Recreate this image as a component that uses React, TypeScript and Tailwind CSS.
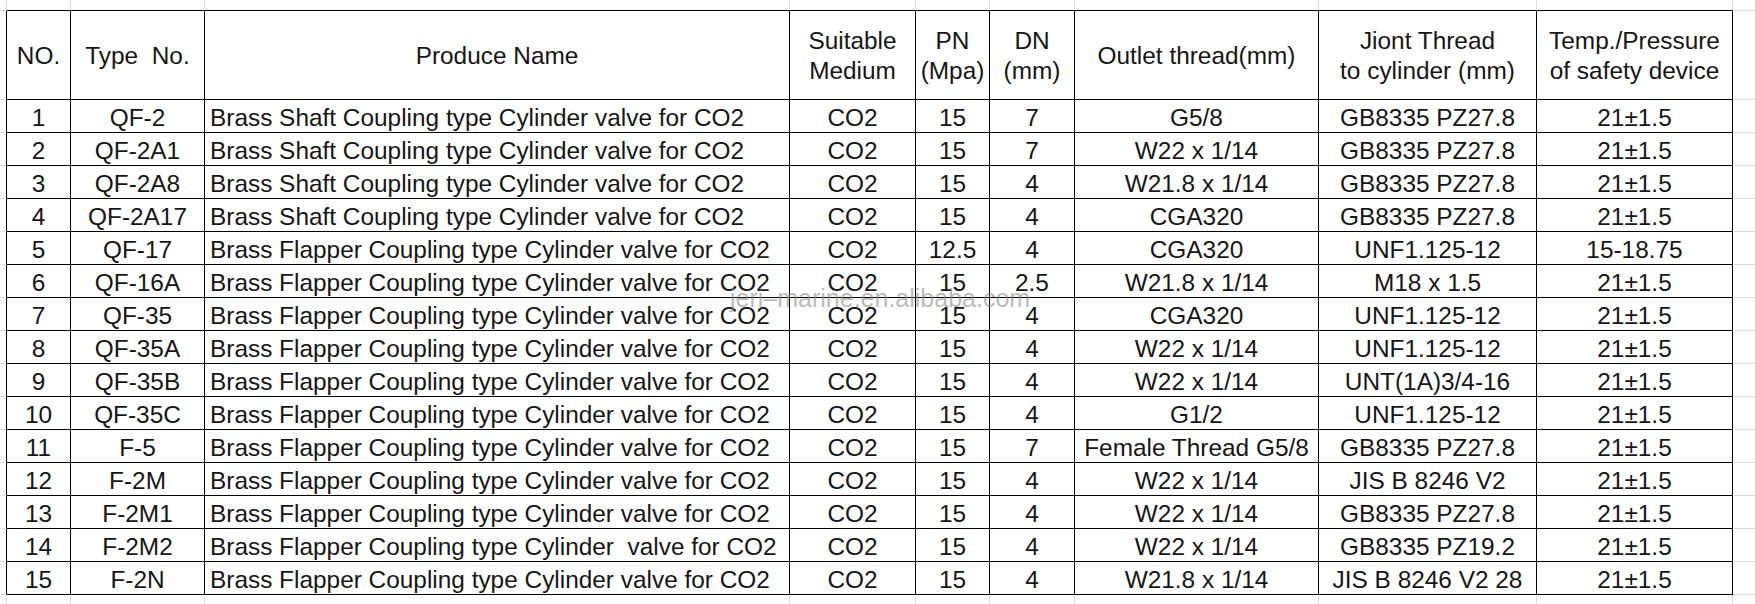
import React from 'react';

const shaft = 'Brass Shaft Coupling type Cylinder valve for CO2';
const flapper = 'Brass Flapper Coupling type Cylinder valve for CO2';

const headers = [
  'NO.',
  'Type  No.',
  'Produce Name',
  'Suitable\nMedium',
  'PN\n(Mpa)',
  'DN\n(mm)',
  'Outlet thread(mm)',
  'Jiont Thread\nto cylinder (mm)',
  'Temp./Pressure\nof safety device',
];

const rows: string[][] = [
  ['1', 'QF-2', shaft, 'CO2', '15', '7', 'G5/8', 'GB8335 PZ27.8', '21±1.5'],
  ['2', 'QF-2A1', shaft, 'CO2', '15', '7', 'W22 x 1/14', 'GB8335 PZ27.8', '21±1.5'],
  ['3', 'QF-2A8', shaft, 'CO2', '15', '4', 'W21.8 x 1/14', 'GB8335 PZ27.8', '21±1.5'],
  ['4', 'QF-2A17', shaft, 'CO2', '15', '4', 'CGA320', 'GB8335 PZ27.8', '21±1.5'],
  ['5', 'QF-17', flapper, 'CO2', '12.5', '4', 'CGA320', 'UNF1.125-12', '15-18.75'],
  ['6', 'QF-16A', flapper, 'CO2', '15', '2.5', 'W21.8 x 1/14', 'M18 x 1.5', '21±1.5'],
  ['7', 'QF-35', flapper, 'CO2', '15', '4', 'CGA320', 'UNF1.125-12', '21±1.5'],
  ['8', 'QF-35A', flapper, 'CO2', '15', '4', 'W22 x 1/14', 'UNF1.125-12', '21±1.5'],
  ['9', 'QF-35B', flapper, 'CO2', '15', '4', 'W22 x 1/14', 'UNT(1A)3/4-16', '21±1.5'],
  ['10', 'QF-35C', flapper, 'CO2', '15', '4', 'G1/2', 'UNF1.125-12', '21±1.5'],
  ['11', 'F-5', flapper, 'CO2', '15', '7', 'Female Thread G5/8', 'GB8335 PZ27.8', '21±1.5'],
  ['12', 'F-2M', flapper, 'CO2', '15', '4', 'W22 x 1/14', 'JIS B 8246 V2', '21±1.5'],
  ['13', 'F-2M1', flapper, 'CO2', '15', '4', 'W22 x 1/14', 'GB8335 PZ27.8', '21±1.5'],
  ['14', 'F-2M2', 'Brass Flapper Coupling type Cylinder  valve for CO2', 'CO2', '15', '4', 'W22 x 1/14', 'GB8335 PZ19.2', '21±1.5'],
  ['15', 'F-2N', flapper, 'CO2', '15', '4', 'W21.8 x 1/14', 'JIS B 8246 V2 28', '21±1.5'],
];

const grid = 'border-[#dcdcdc]';

function MarginRow({ top }: { top: boolean }) {
  // the faint spreadsheet gridlines above / below the table
  return (
    <>
      {Array.from({ length: 11 }).map((_, i) => (
        <div
          key={i}
          className={
            top
              ? i === 10
                ? `border-b ${grid}`
                : i === 0
                ? `border-r border-b ${grid}`
                : `border-r ${grid} border-b border-b-black`
              : i === 10
              ? ''
              : `border-r ${grid}`
          }
        />
      ))}
    </>
  );
}

export default function App() {
  return (
    <div className="relative w-[1755px] h-[604px] overflow-hidden bg-white text-[#161616] font-['Liberation_Sans',Arial,sans-serif] text-[24.4px]">
      <div className="grid h-full grid-cols-[7px_64px_134px_585px_126px_74px_85px_244px_218px_196px_1fr] grid-rows-[11px_89px_repeat(15,33px)_1fr]">
        <MarginRow top />

        {/* header */}
        <div className={`border-r border-r-black border-b ${grid}`} />
        {headers.map((h, i) => (
          <div
            key={i}
            className="flex items-center justify-center border-r border-b border-black pt-[2px] text-center leading-[30px] whitespace-pre"
          >
            {h}
          </div>
        ))}
        <div className={`border-b ${grid}`} />

        {/* data rows */}
        {rows.map((r, ri) => (
          <React.Fragment key={ri}>
            <div className={`border-r border-r-black border-b ${grid}`} />
            {r.map((c, ci) => (
              <div
                key={ci}
                className={`flex items-center border-r border-b border-black pt-[3px] leading-[30px] whitespace-pre ${
                  ci === 2 ? 'justify-start pl-[5px]' : 'justify-center'
                }`}
              >
                {c}
              </div>
            ))}
            <div className={`border-b ${grid}`} />
          </React.Fragment>
        ))}

        <MarginRow top={false} />
      </div>

      {/* watermark */}
      <div className="absolute left-[730px] top-[286px] text-[25px] leading-[25px] text-[rgba(140,140,140,0.6)] whitespace-nowrap pointer-events-none">
        jeri–marine.en.alibaba.com
      </div>
    </div>
  );
}
